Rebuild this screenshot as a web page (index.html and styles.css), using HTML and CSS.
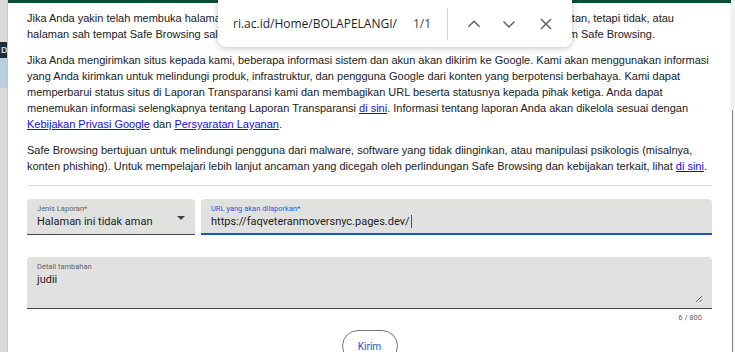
FILE: index.html
```html
<!DOCTYPE html>
<html lang="id">
<head>
<meta charset="utf-8">
<link rel="stylesheet" href="styles.css">
</head>
<body>
<div class="screen">
  <div class="left-strip">
    <div class="ls-dark">D</div>
    <div class="ls-blue"></div>
  </div>
  <main class="panel">
    <p>Jika Anda yakin telah membuka halaman yang seharusnya ditandai oleh Safe Browsing dengan sebuah peringatan, tetapi tidak, atau halaman sah tempat Safe Browsing salah menampilkan peringatan, harap laporkan halaman tersebut kepada tim Safe Browsing.</p>
    <p>Jika Anda mengirimkan situs kepada kami, beberapa informasi sistem dan akun akan dikirim ke Google. Kami akan menggunakan informasi yang Anda kirimkan untuk melindungi produk, infrastruktur, dan pengguna Google dari konten yang berpotensi berbahaya. Kami dapat memperbarui status situs di Laporan Transparansi kami dan membagikan URL beserta statusnya kepada pihak ketiga. Anda dapat menemukan informasi selengkapnya tentang Laporan Transparansi <a href="#">di sini</a>. Informasi tentang laporan Anda akan dikelola sesuai dengan <a href="#">Kebijakan Privasi Google</a> dan <a href="#">Persyaratan Layanan</a>.</p>
    <p>Safe Browsing bertujuan untuk melindungi pengguna dari malware, software yang tidak diinginkan, atau manipulasi psikologis (misalnya, konten phishing). Untuk mempelajari lebih lanjut ancaman yang dicegah oleh perlindungan Safe Browsing dan kebijakan terkait, lihat <a href="#">di sini</a>.</p>
    <hr class="divider">
    <div class="field-row">
      <div class="field select">
        <span class="label">Jenis Laporan*</span>
        <span class="value">Halaman ini tidak aman</span>
        <span class="arrow"></span>
      </div>
      <div class="field focused">
        <span class="label">URL yang akan dilaporkan*</span>
        <span class="value">https://faqveteranmoversnyc.pages.dev/<span class="caret"></span></span>
      </div>
    </div>
    <div class="field textarea">
      <span class="label">Detail tambahan</span>
      <span class="value">judii</span>
      <svg class="grip" width="8" height="8" viewBox="0 0 8 8"><path d="M7 1L1 7M7 4.5L4.5 7" stroke="#555" stroke-width="0.9" fill="none"/></svg>
    </div>
    <div class="counter">6 / 800</div>
    <div class="actions"><button class="btn">Kirim</button></div>
  </main>
  <div class="right-strip"><div class="scroll-line"></div></div>

  <div class="findbar">
    <span class="find-text">ri.ac.id/Home/BOLAPELANGI/</span>
    <span class="find-count">1/1</span>
    <span class="find-sep"></span>
    <svg class="find-icon" width="16" height="16" viewBox="0 0 16 16"><path d="M2.5 10.8L8 5.3l5.5 5.5" stroke="#5f6368" stroke-width="1.5" fill="none"/></svg>
    <svg class="find-icon" width="16" height="16" viewBox="0 0 16 16"><path d="M2.5 5.5L8 11l5.5-5.5" stroke="#5f6368" stroke-width="1.5" fill="none"/></svg>
    <svg class="find-icon close" width="16" height="16" viewBox="0 0 16 16"><path d="M3 3l10 10M13 3L3 13" stroke="#5f6368" stroke-width="1.5" fill="none"/></svg>
  </div>
</div>
</body>
</html>
```
FILE: styles.css
```css
* { box-sizing: border-box; }
html, body { margin: 0; padding: 0; }
body { width: 735px; height: 352px; overflow: hidden; background: #dcdcdc; }
.screen { position: relative; display: flex; height: 352px; }
.left-strip { width: 8px; flex: none; background: #dadada; border-right: 1px solid #c4c4c4; display: flex; flex-direction: column; padding-top: 42px; overflow: hidden; }
.ls-dark { height: 16px; background: #1d2c3c; color: #cfd6dd; font: bold 9px "Liberation Sans", sans-serif; line-height: 16px; padding-left: 1px; }
.ls-blue { height: 30px; background: #b8cde0; }
.panel { flex: 1; background: #fff; border-top: 3px solid #0c4d37; padding: 7px 19px 0 19px; font-family: "Liberation Sans", Arial, sans-serif; font-size: 11px; line-height: 16px; color: #202124; overflow: hidden; }
.panel p { margin: 0 0 10px 0; }
.panel a { color: #1a0dcc; text-decoration: underline; }
.divider { border: 0; border-top: 1px solid #dadce0; margin: 11px 0 13px 0; }
.field-row { display: grid; grid-template-columns: 168px 1fr; gap: 6px; }
.field { position: relative; background: #e1e2e0; border-radius: 4px 4px 0 0; border-bottom: 1px solid #444746; height: 36px; padding: 5px 10px 0 10px; display: flex; flex-direction: column; font-family: Roboto, "Liberation Sans", sans-serif; }
.field .label { font-size: 7.5px; line-height: 10px; color: #5f6368; }
.field .value { font-size: 11px; line-height: 16px; margin-top: 0; color: #202124; }
.field.focused { border-bottom: 2px solid #1a57c4; }
.field.focused .label { color: #1a62d6; }
.caret { display: inline-block; width: 1px; height: 13px; background: #1a57c4; vertical-align: -3px; margin-left: 1px; }
.arrow { position: absolute; right: 10px; top: 17px; width: 0; height: 0; border-left: 4px solid transparent; border-right: 4px solid transparent; border-top: 4px solid #444; }
.field.textarea { margin-top: 22px; height: 52px; }
.grip { position: absolute; right: 9px; bottom: 5px; }
.counter { text-align: right; font-family: Roboto, sans-serif; font-size: 7.5px; line-height: 10px; color: #5f6368; padding-right: 10px; margin-top: 4px; }
.actions { display: flex; justify-content: center; margin-top: 7px; }
.btn { width: 56px; height: 32px; border: 1px solid #747775; border-radius: 16px; background: #fff; color: #0b57d0; font-family: Roboto, sans-serif; font-size: 10px; padding: 0; }
.right-strip { width: 4px; flex: none; background: #f1f1f1; position: relative; }
.scroll-line { position: absolute; left: 1px; top: 110px; bottom: 0; width: 1px; background: #8a8a8a; }
.findbar { position: absolute; left: 218px; top: -10px; width: 354px; height: 57px; padding-top: 10px; background: #fff; border-radius: 8px; box-shadow: 0 1px 6px rgba(0,0,0,0.25); display: flex; align-items: center; font-family: "Open Sans", "Liberation Sans", sans-serif; font-size: 12px; color: #1f1f1f; }
.findbar > * { flex: none; }
.find-text { margin-left: 15px; width: 180px; }
.find-count { color: #444; width: 34px; }
.find-sep { width: 1px; height: 32px; background: #c9d5e6; margin-right: 18px; }
.find-icon { margin-right: 19px; }
.find-icon.close { margin-left: 2px; }
```
